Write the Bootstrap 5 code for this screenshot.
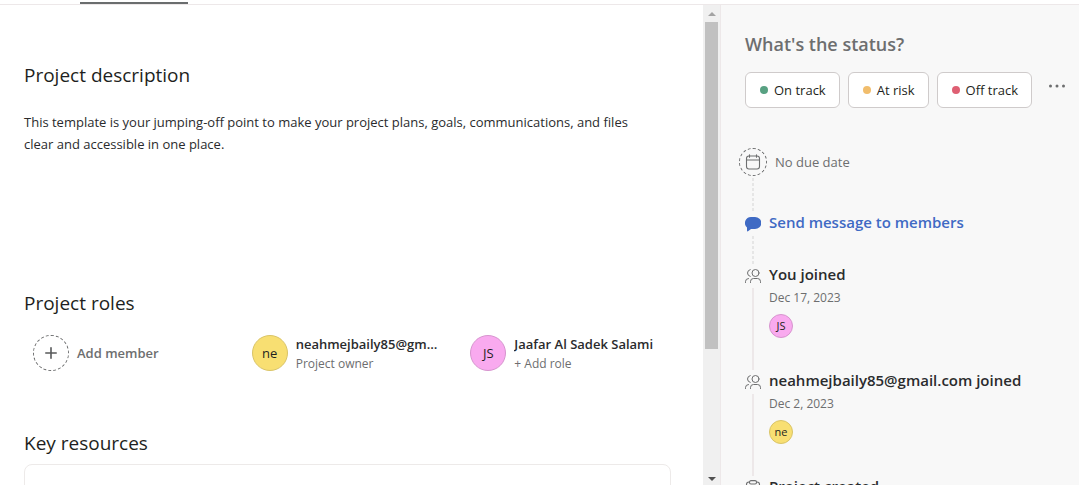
<!DOCTYPE html>
<html lang="en">
<head>
<meta charset="utf-8">
<meta name="viewport" content="width=device-width, initial-scale=1">
<title>Project overview</title>
<link rel="stylesheet" href="https://cdn.jsdelivr.net/npm/bootstrap@5.3.0/dist/css/bootstrap.min.css">
<style>
  body { font-family: "Open Sans", "Noto Sans", sans-serif; font-size: 13px; line-height: 22px; color: #1e1f21; }
  h2 { font-size: 19px; line-height: 24px; font-weight: 500; margin: 0; color: #1e1f21; }
  button { font-family: inherit; }
  .tab-strip { height: 5px; border-bottom: 1px solid #ede8e9; padding: 2px 0 0 80px; }
  .tab-current { width: 108px; height: 2px; background: #6a6d6e; }
  .overview { padding: 58px 32px 0 24px; }
  .blurb { margin: 24px 0 0; padding-right: 16px; color: #2a2b2d; }
  .roles-title { margin-top: 136px; }
  .roles { display: grid; grid-template-columns: repeat(3, minmax(0, 1fr)); gap: 18px; padding: 17px 0 0 9px; }
  .ring { border: 1px dashed #6d6e6f; border-radius: 50%; color: #6d6e6f; }
  .ring-lg { width: 36px; height: 36px; }
  .ring-sm { width: 28px; height: 28px; }
  .avatar { width: 36px; height: 36px; border-radius: 50%; border: 1px solid; font-size: 13px; flex: none; }
  .avatar-sm { width: 24px; height: 24px; font-size: 11px; }
  .avatar-yellow { background: #f8df72; border-color: #d9c468; }
  .avatar-pink { background: #f9aaef; border-color: #d695ce; }
  .plain-btn { background: none; border: 0; padding: 0; color: #6d6e6f; text-align: left; }
  .who { font-weight: 600; line-height: 20px; }
  div.who { color: #2a2b2d; margin-top: 2px; }
  .role-note { font-size: 12px; line-height: 20px; color: #6d6e6f; }
  .resources-title { margin-top: 57px; }
  .resource-box { margin-top: 9px; height: 120px; border: 1px solid #edeae9; border-radius: 8px; }
  .scroll-track { width: 17px; background: #f0f0f0; padding: 0 2px; }
  .scroll-arrow { height: 17px; }
  .scroll-thumb { background: #c1c1c1; flex: 0 0 68.2%; }
  .status-panel { flex: 0 0 359px; background: #f8f8f8; border-left: 1px solid #ede8e9; padding: 27px 0 0 24px; color: #6d6e6f; }
  .status-panel h2 { font-size: 18px; font-weight: 600; color: #6d6e6f; }
  .status-btn { height: 36px; border: 1px solid #cfcbcb; border-radius: 6px; background: #fff; color: #1e1f21; padding: 0 13px 0 14px; }
  .dot { width: 8px; height: 8px; border-radius: 50%; margin-right: 6px; }
  .dot-green { background: #58a182; }
  .dot-amber { background: #f1bd6c; }
  .dot-red { background: #de5f73; }
  .timeline { margin: 40px 0 0 -6px; }
  .rail { width: 28px; flex: none; }
  .rail svg { flex: none; }
  .rail-line { flex: 1; width: 2px; margin: 4px 0; background: #ede8e9; }
  .rail-dotted { background: repeating-linear-gradient(#e6e6e6 0 3px, transparent 3px 5px); }
  .rail .ring + .rail-line { margin-top: 2px; }
  .due-entry { height: 68px; }
  .msg-entry { height: 52px; }
  .due-text { line-height: 28px; }
  .entry { padding-left: 2px; }
  .entry-title { font-size: 15px; line-height: 12px; font-weight: 600; color: #2a2b2d; margin: 0; }
  .entry a { font-size: 15px; line-height: 12px; font-weight: 600; color: #3f6ac4; text-decoration: none; }
  .entry-date { font-size: 12px; line-height: 16px; margin: 10px 0 8px; }
  .entry .avatar { margin-bottom: 36px; color: #1e1f21; }
</style>
</head>
<body>
<div class="vh-100 d-flex flex-column overflow-hidden">
  <div class="tab-strip flex-shrink-0"><div class="tab-current"></div></div>
  <div class="d-flex flex-grow-1 overflow-hidden">
    <main class="overview flex-grow-1 overflow-hidden">
      <h2>Project description</h2>
      <p class="blurb">This template is your jumping-off point to make your project plans, goals, communications, and files clear and accessible in one place.</p>
      <h2 class="roles-title">Project roles</h2>
      <div class="roles">
        <button type="button" class="plain-btn who d-flex align-items-center gap-2">
          <span class="ring ring-lg d-flex align-items-center justify-content-center">
            <svg width="12" height="12" viewBox="0 0 12 12" stroke="#58595a" stroke-width="1.6" stroke-linecap="round"><path d="M6 .8v10.4M.8 6h10.4"/></svg>
          </span>
          Add member
        </button>
        <div class="d-flex align-items-center gap-2">
          <span class="avatar avatar-yellow d-flex align-items-center justify-content-center">ne</span>
          <div class="overflow-hidden pe-2">
            <div class="who text-truncate">neahmejbaily85@gmail.com</div>
            <div class="role-note">Project owner</div>
          </div>
        </div>
        <div class="d-flex align-items-center gap-2">
          <span class="avatar avatar-pink d-flex align-items-center justify-content-center">JS</span>
          <div class="overflow-hidden">
            <div class="who text-truncate">Jaafar Al Sadek Salami</div>
            <button type="button" class="plain-btn role-note d-block">+ Add role</button>
          </div>
        </div>
      </div>
      <h2 class="resources-title">Key resources</h2>
      <div class="resource-box"></div>
    </main>
    <div class="scroll-track d-flex flex-column flex-shrink-0">
      <div class="scroll-arrow d-flex flex-shrink-0 align-items-center justify-content-center"><svg width="8" height="4" viewBox="0 0 8 4"><path d="M4 0l4 4H0z" fill="#a3a3a3"/></svg></div>
      <div class="scroll-thumb"></div>
      <div class="flex-grow-1"></div>
      <div class="scroll-arrow d-flex flex-shrink-0 align-items-end justify-content-center"><svg class="mb-1" width="8" height="4" viewBox="0 0 8 4"><path d="M0 0h8L4 4z" fill="#505050"/></svg></div>
    </div>
    <aside class="status-panel overflow-hidden">
      <h2>What's the status?</h2>
      <div class="d-flex gap-2 mt-3">
        <button type="button" class="status-btn d-flex align-items-center"><span class="dot dot-green"></span>On track</button>
        <button type="button" class="status-btn d-flex align-items-center"><span class="dot dot-amber"></span>At risk</button>
        <button type="button" class="status-btn d-flex align-items-center"><span class="dot dot-red"></span>Off track</button>
        <button type="button" class="plain-btn ms-2 pb-2" aria-label="More options"><svg class="d-block" width="18" height="4" viewBox="0 0 18 4" fill="#6d6e6f"><circle cx="2.500" cy="2" r="1.500"/><circle cx="9" cy="2" r="1.500"/><circle cx="15.500" cy="2" r="1.500"/></svg></button>
      </div>
      <div class="timeline">
        <div class="due-entry d-flex">
          <div class="rail d-flex flex-column align-items-center">
            <span class="ring ring-sm d-flex align-items-center justify-content-center">
              <svg width="16" height="16" viewBox="0 0 16 16" fill="none" stroke="#6d6e6f" stroke-width="1.1" stroke-linecap="round"><rect x="1.5" y="2" width="13" height="13" rx="2.5"/><path d="M1.5 6h13M4.5 .8v2.400M11.5 .8v2.400"/></svg>
            </span>
            <span class="rail-line rail-dotted"></span>
          </div>
          <span class="due-text ps-2">No due date</span>
        </div>
        <div class="msg-entry d-flex">
          <div class="rail d-flex flex-column align-items-center">
            <svg width="16" height="16" viewBox="0 0 16 16"><path d="M6 1h4a6 5.700 0 0 1 0 12H6L3 15.200Q2 15.800 2 14.600V11.500A6 6 0 0 1 6 1z" fill="#3f6ac4"/></svg>
            <span class="rail-line rail-dotted"></span>
          </div>
          <div class="entry"><a class="d-block" href="#">Send message to members</a></div>
        </div>
        <div class="d-flex">
          <div class="rail d-flex flex-column align-items-center">
            <svg width="16" height="16" viewBox="0 0 16 16" fill="none" stroke="#6d6e6f" stroke-width="1" stroke-linecap="round"><circle cx="10.500" cy="5" r="3.500"/><path d="M5.500 14.500v-1q0-3 3-3h4q3 0 3 3v1M5.200 8.400A3.500 3.500 0 0 1 5.200 1.600M.5 14.500v-1q0-2.800 3-3"/></svg>
            <span class="rail-line"></span>
          </div>
          <div class="entry">
            <h3 class="entry-title">You joined</h3>
            <p class="entry-date">Dec 17, 2023</p>
            <span class="avatar avatar-sm avatar-pink d-flex align-items-center justify-content-center">JS</span>
          </div>
        </div>
        <div class="d-flex">
          <div class="rail d-flex flex-column align-items-center">
            <svg width="16" height="16" viewBox="0 0 16 16" fill="none" stroke="#6d6e6f" stroke-width="1" stroke-linecap="round"><circle cx="10.500" cy="5" r="3.500"/><path d="M5.500 14.500v-1q0-3 3-3h4q3 0 3 3v1M5.200 8.400A3.500 3.500 0 0 1 5.200 1.600M.5 14.500v-1q0-2.800 3-3"/></svg>
            <span class="rail-line"></span>
          </div>
          <div class="entry">
            <h3 class="entry-title">neahmejbaily85@gmail.com joined</h3>
            <p class="entry-date">Dec 2, 2023</p>
            <span class="avatar avatar-sm avatar-yellow d-flex align-items-center justify-content-center">ne</span>
          </div>
        </div>
        <div class="d-flex">
          <div class="rail d-flex flex-column align-items-center">
            <svg width="16" height="16" viewBox="0 0 16 16" fill="none" stroke="#6d6e6f" stroke-width="1.1"><rect x="1.500" y="2" width="13" height="13" rx="2.500"/><rect x="4.500" y=".6" width="7" height="3.400" rx="1.500" fill="#f8f8f8"/></svg>
          </div>
          <div class="entry"><h3 class="entry-title">Project created</h3></div>
        </div>
      </div>
    </aside>
  </div>
</div>
<script src="https://cdn.jsdelivr.net/npm/bootstrap@5.3.0/dist/js/bootstrap.bundle.min.js"></script>
</body>
</html>
